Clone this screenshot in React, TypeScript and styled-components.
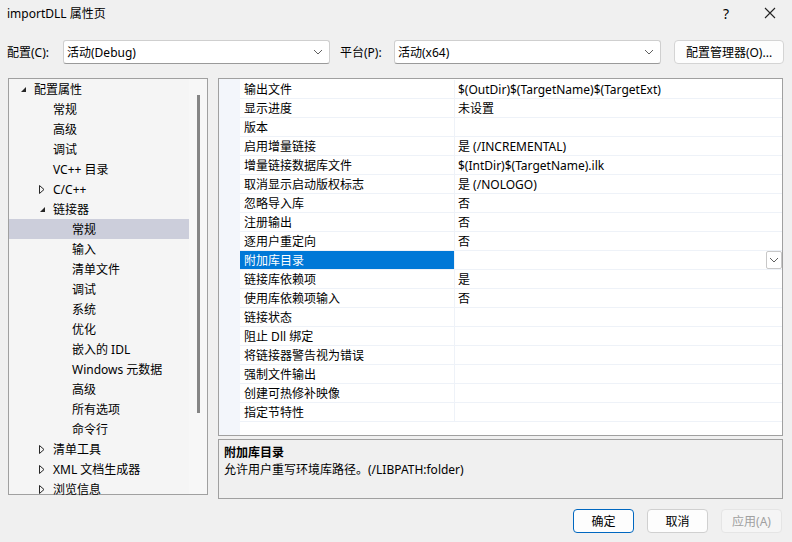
import React from "react";
import styled, { createGlobalStyle } from "styled-components";

const GlobalStyle = createGlobalStyle`
  html, body {
    margin: 0;
    padding: 0;
    background: #f0f0f0;
  }
  body {
    font-family: "Noto Sans", "Noto Sans CJK SC", sans-serif;
    font-size: 12px;
    color: #000;
  }
`;

const Dialog = styled.div`
  width: 792px;
  height: 542px;
  background: #f0f0f0;
  display: flex;
  flex-direction: column;
  overflow: hidden;
`;

const TitleBar = styled.div`
  height: 26px;
  display: flex;
  align-items: center;
  padding-left: 7px;
  padding-top: 0;
`;

const Title = styled.div`
  flex: 1;
  font-size: 12px;
`;

const TitleButton = styled.div`
  width: 44px;
  height: 26px;
  display: flex;
  align-items: center;
  justify-content: center;
  font-size: 14px;
`;

const ConfigRow = styled.div`
  margin-top: 14px;
  height: 24px;
  display: flex;
  align-items: center;
  padding-left: 7px;
`;

const Label = styled.span<{ $width: number }>`
  width: ${(p) => p.$width}px;
  white-space: nowrap;
`;

const Combo = styled.div`
  box-sizing: border-box;
  width: 267px;
  height: 24px;
  background: #fff;
  border: 1px solid #cfcfcf;
  border-bottom-color: #9a9a9a;
  border-radius: 3px;
  display: flex;
  align-items: center;
  padding-left: 3px;
  padding-right: 6px;
  margin-right: 10px;
`;

const ComboText = styled.span`
  flex: 1;
`;

const SmallButton = styled.div`
  box-sizing: border-box;
  margin-left: 3px;
  width: 110px;
  height: 24px;
  background: #fdfdfd;
  border: 1px solid #d4d4d4;
  border-radius: 4px;
  display: flex;
  align-items: center;
  justify-content: center;
`;

const Main = styled.div`
  margin-top: 14px;
  display: flex;
  padding-left: 8px;
  gap: 10px;
`;

const TreePanel = styled.div`
  box-sizing: border-box;
  width: 200px;
  height: 417px;
  border: 1px solid #a0a0a0;
  background: #f5f5f5;
  display: flex;
`;

const TreeList = styled.div`
  width: 180px;
  display: flex;
  flex-direction: column;
`;

const TreeRow = styled.div<{ $level: number; $selected?: boolean }>`
  height: 20px;
  display: flex;
  align-items: center;
  padding-left: ${(p) => 11 + p.$level * 19}px;
  background: ${(p) => (p.$selected ? "#cccedb" : "transparent")};
  white-space: nowrap;
`;

const Twisty = styled.span`
  width: 14px;
  height: 20px;
  display: flex;
  align-items: center;
  justify-content: flex-start;
`;

const ScrollTrack = styled.div`
  flex: 1;
  background: #f7f7f7;
  display: flex;
  justify-content: center;
  padding-top: 16px;
`;

const ScrollThumb = styled.div`
  width: 3px;
  height: 318px;
  background: #858585;
  margin-left: 1px;
`;

const RightCol = styled.div`
  width: 565px;
  display: flex;
  flex-direction: column;
  gap: 3px;
`;

const Grid = styled.div`
  box-sizing: border-box;
  height: 358px;
  border: 1px solid #a0a0a0;
  background: #fff;
  display: flex;
`;

const Gutter = styled.div`
  width: 21px;
  background: #f3f6fb;
`;

const GridBody = styled.div`
  flex: 1;
  padding-top: 1px;
  display: flex;
  flex-direction: column;
`;

const PropRow = styled.div`
  height: 18px;
  border-bottom: 1px solid #eef2f8;
  display: flex;
`;

const NameCell = styled.div<{ $selected?: boolean }>`
  box-sizing: border-box;
  width: 215px;
  padding-left: 4px;
  border-right: 1px solid #eef2f8;
  display: flex;
  align-items: center;
  background: ${(p) => (p.$selected ? "#0078d7" : "transparent")};
  color: ${(p) => (p.$selected ? "#fff" : "#000")};
  white-space: nowrap;
`;

const ValueCell = styled.div`
  flex: 1;
  padding-left: 3px;
  display: flex;
  align-items: center;
  white-space: nowrap;
`;

const DropButton = styled.div`
  box-sizing: border-box;
  margin-left: auto;
  width: 16px;
  height: 18px;
  border: 1px solid #c8c8c8;
  border-radius: 2px;
  display: flex;
  align-items: center;
  justify-content: center;
  background: #fff;
`;

const Description = styled.div`
  box-sizing: border-box;
  height: 60px;
  border: 1px solid #a0a0a0;
  background: #f0f0f0;
  padding: 4px 5px;
  line-height: 17px;
`;

const DescTitle = styled.div`
  font-weight: bold;
`;

const Footer = styled.div`
  margin-top: 10px;
  display: flex;
  justify-content: flex-end;
  gap: 13px;
  padding-right: 10px;
`;

const Button = styled.div<{ $primary?: boolean; $disabled?: boolean }>`
  box-sizing: border-box;
  width: 61px;
  height: 24px;
  border-radius: 4px;
  display: flex;
  align-items: center;
  justify-content: center;
  background: ${(p) => (p.$disabled ? "#f5f5f5" : "#fdfdfd")};
  border: 1px solid
    ${(p) => (p.$primary ? "#0067c0" : p.$disabled ? "#e5e5e5" : "#d0d0d0")};
  color: ${(p) => (p.$disabled ? "#a0a0a0" : "#000")};
`;

const Chevron = () => (
  <svg width="10" height="6" viewBox="0 0 10 6">
    <path d="M1 1 L5 5 L9 1" fill="none" stroke="#606060" strokeWidth="1" />
  </svg>
);

const Expanded = () => (
  <svg width="7" height="7" viewBox="0 0 7 7">
    <path d="M6 1 L6 6 L1 6 Z" fill="#262626" />
  </svg>
);

const Collapsed = () => (
  <svg width="6" height="9" viewBox="0 0 6 9">
    <path d="M0.5 0.5 L5 4.5 L0.5 8.5 Z" fill="none" stroke="#262626" strokeWidth="1" />
  </svg>
);

type TreeItem = { label: string; level: number; twisty?: "open" | "closed"; selected?: boolean };

const treeItems: TreeItem[] = [
  { label: "配置属性", level: 0, twisty: "open" },
  { label: "常规", level: 1 },
  { label: "高级", level: 1 },
  { label: "调试", level: 1 },
  { label: "VC++ 目录", level: 1 },
  { label: "C/C++", level: 1, twisty: "closed" },
  { label: "链接器", level: 1, twisty: "open" },
  { label: "常规", level: 2, selected: true },
  { label: "输入", level: 2 },
  { label: "清单文件", level: 2 },
  { label: "调试", level: 2 },
  { label: "系统", level: 2 },
  { label: "优化", level: 2 },
  { label: "嵌入的 IDL", level: 2 },
  { label: "Windows 元数据", level: 2 },
  { label: "高级", level: 2 },
  { label: "所有选项", level: 2 },
  { label: "命令行", level: 2 },
  { label: "清单工具", level: 1, twisty: "closed" },
  { label: "XML 文档生成器", level: 1, twisty: "closed" },
  { label: "浏览信息", level: 1, twisty: "closed" },
];

const props: [string, string][] = [
  ["输出文件", "$(OutDir)$(TargetName)$(TargetExt)"],
  ["显示进度", "未设置"],
  ["版本", ""],
  ["启用增量链接", "是 (/INCREMENTAL)"],
  ["增量链接数据库文件", "$(IntDir)$(TargetName).ilk"],
  ["取消显示启动版权标志", "是 (/NOLOGO)"],
  ["忽略导入库", "否"],
  ["注册输出", "否"],
  ["逐用户重定向", "否"],
  ["附加库目录", ""],
  ["链接库依赖项", "是"],
  ["使用库依赖项输入", "否"],
  ["链接状态", ""],
  ["阻止 Dll 绑定", ""],
  ["将链接器警告视为错误", ""],
  ["强制文件输出", ""],
  ["创建可热修补映像", ""],
  ["指定节特性", ""],
];

const SELECTED = 9;

export default function App() {
  return (
    <Dialog>
      <GlobalStyle />
      <TitleBar>
        <Title>importDLL 属性页</Title>
        <TitleButton>?</TitleButton>
        <TitleButton>
          <svg width="12" height="12" viewBox="0 0 12 12">
            <path d="M1 1 L11 11 M11 1 L1 11" stroke="#222" strokeWidth="1.1" />
          </svg>
        </TitleButton>
      </TitleBar>

      <ConfigRow>
        <Label $width={56}>配置(C):</Label>
        <Combo>
          <ComboText>活动(Debug)</ComboText>
          <Chevron />
        </Combo>
        <Label $width={54}>平台(P):</Label>
        <Combo>
          <ComboText>活动(x64)</ComboText>
          <Chevron />
        </Combo>
        <SmallButton>配置管理器(O)...</SmallButton>
      </ConfigRow>

      <Main>
        <TreePanel>
          <TreeList>
            {treeItems.map((it, i) => (
              <TreeRow key={i} $level={it.level} $selected={it.selected}>
                <Twisty>
                  {it.twisty === "open" && <Expanded />}
                  {it.twisty === "closed" && <Collapsed />}
                </Twisty>
                {it.label}
              </TreeRow>
            ))}
          </TreeList>
          <ScrollTrack>
            <ScrollThumb />
          </ScrollTrack>
        </TreePanel>

        <RightCol>
          <Grid>
            <Gutter />
            <GridBody>
              {props.map(([name, value], i) => (
                <PropRow key={i}>
                  <NameCell $selected={i === SELECTED}>{name}</NameCell>
                  <ValueCell>
                    {value}
                    {i === SELECTED && (
                      <DropButton>
                        <Chevron />
                      </DropButton>
                    )}
                  </ValueCell>
                </PropRow>
              ))}
            </GridBody>
          </Grid>
          <Description>
            <DescTitle>附加库目录</DescTitle>
            <div>允许用户重写环境库路径。(/LIBPATH:folder)</div>
          </Description>
        </RightCol>
      </Main>

      <Footer>
        <Button $primary>确定</Button>
        <Button>取消</Button>
        <Button $disabled>应用(A)</Button>
      </Footer>
    </Dialog>
  );
}
